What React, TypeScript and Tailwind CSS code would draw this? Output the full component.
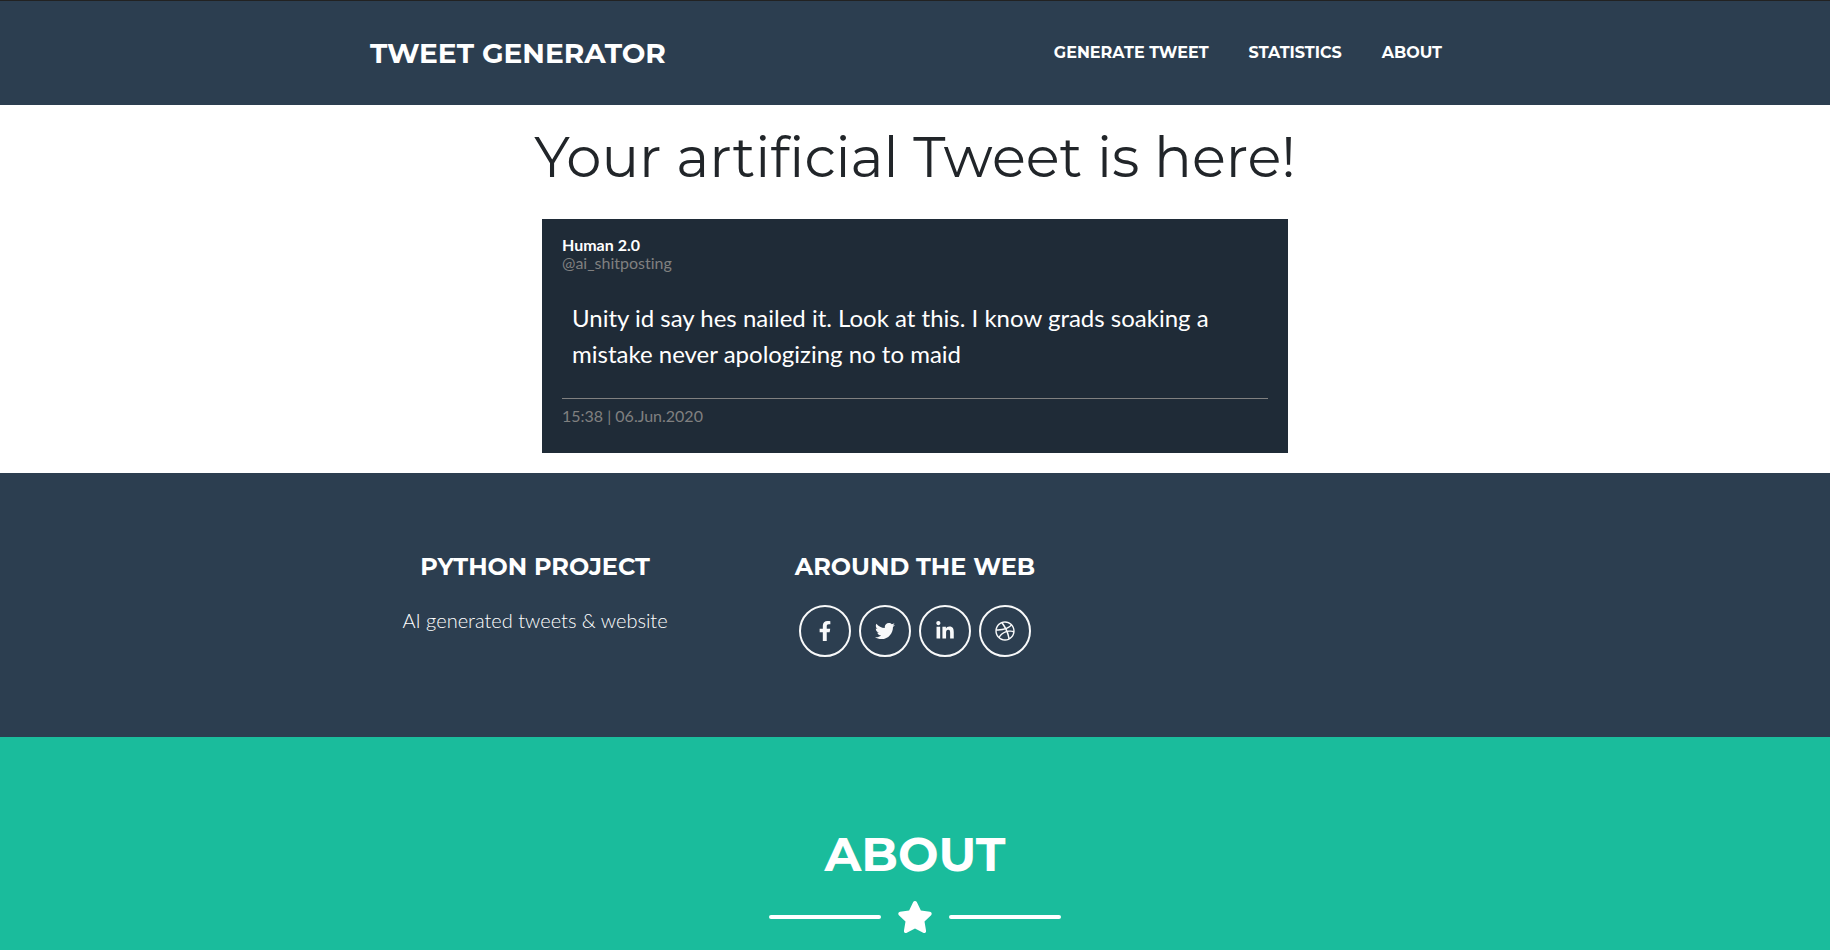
import type { ReactNode } from 'react';
import { FaFacebookF, FaTwitter, FaLinkedinIn, FaDribbble, FaStar } from 'react-icons/fa';

const navLinks = [
  { label: 'Generate Tweet', href: '#generate' },
  { label: 'Statistics', href: '#statistics' },
  { label: 'About', href: '#about' },
];

const socialLinks = [
  { label: 'Facebook', icon: FaFacebookF },
  { label: 'Twitter', icon: FaTwitter },
  { label: 'LinkedIn', icon: FaLinkedinIn },
  { label: 'Dribbble', icon: FaDribbble },
];

function Header() {
  return (
    <header className="border-t border-[#222222] bg-[#2c3e50] font-[Montserrat,Inter,sans-serif] font-bold text-white uppercase">
      <div className="mx-auto flex h-[104px] max-w-[1140px] items-center justify-between pr-[43px] pl-[25px]">
        <a href="#top" className="text-[28px] leading-[42px]">
          Tweet Generator
        </a>
        <nav className="flex gap-10 text-base">
          {navLinks.map((link) => (
            <a key={link.href} href={link.href}>
              {link.label}
            </a>
          ))}
        </nav>
      </div>
    </header>
  );
}

function TweetCard() {
  return (
    <article className="mx-auto max-w-[746px] bg-[#1f2b37] px-5 pt-[17px] pb-[26px] text-base">
      <div className="leading-[18px]">
        <p className="font-bold text-white">Human 2.0</p>
        <p className="text-[#808080]">@ai_shitposting</p>
      </div>
      <p className="px-[10px] pt-7 pb-[26px] text-2xl leading-9 text-white">
        Unity id say hes nailed it. Look at this. I know grads soaking a mistake never apologizing
        no to maid
      </p>
      <p className="border-t border-[#808080] pt-[6px] leading-[22px] text-[#808080]">15:38 | 06.Jun.2020</p>
    </article>
  );
}

function FooterColumn({ title, children }: { title: string; children?: ReactNode }) {
  return (
    <section className="text-center">
      <h2 className="mb-6 font-[Montserrat,Inter,sans-serif] text-2xl leading-7 font-bold uppercase">{title}</h2>
      {children}
    </section>
  );
}

export default function App() {
  return (
    <div
      id="top"
      className="min-h-screen overflow-x-hidden bg-white font-[Lato,sans-serif] [font-variant-ligatures:none]"
    >
      <Header />
      <main id="generate" className="pb-5">
        <h1 className="pt-4 pb-[26px] text-center font-[Montserrat,Inter,sans-serif] text-[56px] leading-[72px] font-normal text-[#212529]">
          Your artificial Tweet is here!
        </h1>
        <TweetCard />
      </main>
      <section id="statistics" className="bg-[#2c3e50] pt-20 pb-20 text-white">
        <div className="mx-auto grid max-w-[1140px] grid-cols-3">
          <FooterColumn title="Python Project">
            <p className="text-xl leading-[30px] font-light">AI generated tweets &amp; website</p>
          </FooterColumn>
          <FooterColumn title="Around the Web">
            <div className="flex justify-center gap-2">
              {socialLinks.map(({ label, icon: Icon }) => (
                <a
                  key={label}
                  href={`#${label.toLowerCase()}`}
                  aria-label={label}
                  className="flex size-[52px] items-center justify-center rounded-full border-2 border-[#f8f9fa] text-xl text-[#f8f9fa]"
                >
                  <Icon />
                </a>
              ))}
            </div>
          </FooterColumn>
        </div>
      </section>
      <section id="about" className="bg-[#1abc9c] pt-22 pb-24 text-white">
        <h2 className="text-center font-[Montserrat,Inter,sans-serif] text-5xl leading-[58px] font-bold uppercase">About</h2>
        <div className="mt-4 flex items-center justify-center gap-4">
          <span className="h-1 w-28 rounded-full bg-white" />
          <FaStar className="size-9" />
          <span className="h-1 w-28 rounded-full bg-white" />
        </div>
      </section>
    </div>
  );
}
